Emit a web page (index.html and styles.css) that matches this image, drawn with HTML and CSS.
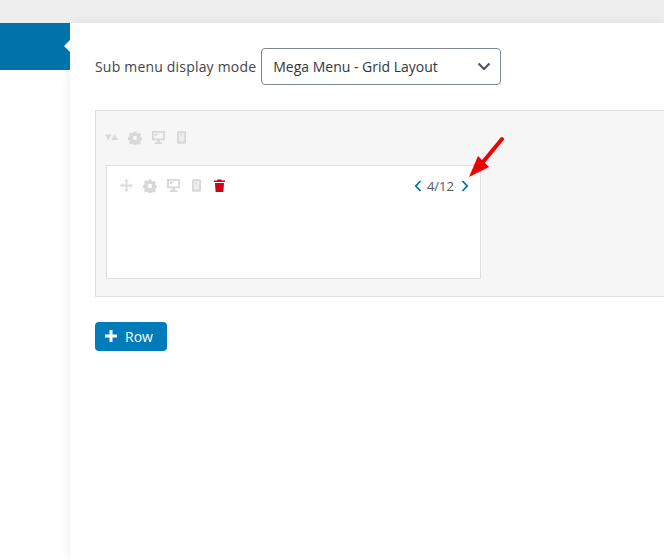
FILE: index.html
```html
<!DOCTYPE html>
<html lang="en">
<head>
<meta charset="utf-8">
<title>Mega Menu</title>
<link rel="stylesheet" href="styles.css">
</head>
<body>
<div class="topbar"></div>
<div class="layout">
  <aside class="sidebar"><div class="tab"><span class="tab-notch"></span></div></aside>
  <main class="main">
    <div class="mode-row">
      <label class="mode-label">Sub menu display mode</label>
      <div class="select"><span>Mega Menu - Grid Layout</span>
        <svg class="select-caret" width="14" height="9" viewBox="0 0 14 9"><path d="M1.500 1.500 7 7l5.500-5.500" fill="none" stroke="#50575e" stroke-width="2.200"/></svg>
      </div>
    </div>
    <section class="row-box">
      <div class="toolbar row-toolbar">
        <svg class="ic" width="13" height="7" viewBox="0 0 13 7"><path d="M0 .5h6.400L3.200 6zM6.200 6l3.300-5.500L13 6z" fill="#d8d8d8"/></svg>
        <svg class="ic" width="14" height="14" viewBox="0 0 15 15"><use href="#gear"/></svg>
        <svg class="ic" width="13" height="13" viewBox="0 0 14 14"><use href="#desk"/></svg>
        <svg class="ic ic-phone" width="9" height="13" viewBox="0 0 10 14"><use href="#phone"/></svg>
      </div>
      <div class="col-box">
        <div class="toolbar col-toolbar">
          <svg class="ic" width="13" height="13" viewBox="0 0 14 14"><path d="M7 0l2.600 2.800H8V6h3.200V4.400L14 7l-2.800 2.600V8H8v3.200h1.600L7 14l-2.600-2.800H6V8H2.800v1.600L0 7l2.800-2.600V6H6V2.800H4.400z" fill="#dcdcdc"/></svg>
          <svg class="ic" width="14" height="14" viewBox="0 0 15 15"><use href="#gear"/></svg>
          <svg class="ic" width="13" height="13" viewBox="0 0 14 14"><use href="#desk"/></svg>
          <svg class="ic ic-phone" width="9" height="13" viewBox="0 0 10 14"><use href="#phone"/></svg>
          <svg class="ic ic-trash" width="11" height="13" viewBox="0 0 11 13"><path d="M3.600.5h3.800l.6 1h3v1.500H0V1.500h3zM1 4h9l-.6 9H1.600z" fill="#d0021b"/></svg>
          <div class="pager">
            <svg width="8" height="12" viewBox="0 0 8 12"><path d="M6.500 1 1.800 6l4.700 5" fill="none" stroke="#0073aa" stroke-width="1.800"/></svg>
            <span class="pager-text">4/12</span>
            <svg width="8" height="12" viewBox="0 0 8 12"><path d="M1.500 1l4.700 5-4.700 5" fill="none" stroke="#0073aa" stroke-width="1.800"/></svg>
          </div>
        </div>
      </div>
    </section>
    <button class="add-row" type="button">
      <svg class="plus" width="12" height="12" viewBox="0 0 12 12"><path d="M6 0v12M0 6h12" stroke="#fff" stroke-width="3" fill="none"/></svg>
      <span>Row</span>
    </button>
  </main>
</div>
<svg class="arrow" width="44" height="50" viewBox="0 0 44 50"><path d="M40 3 21 26" stroke="#f00000" stroke-width="4" stroke-linecap="round" fill="none"/><path d="M7 41 16 20 27 31z" fill="#f00000"/></svg>
<svg class="defs" width="0" height="0">
  <defs>
    <g id="gear"><path fill-rule="evenodd" d="M6 0h3l.4 2 1.300.6L12.500 1.500l2 2-1.100 1.800.6 1.300 2 .4v2.800l-2 .4-.6 1.300 1.100 1.800-2 2-1.800-1.100-1.300.6-.4 2H6l-.4-2-1.300-.6-1.800 1.100-2-2 1.100-1.800-.6-1.300-2-.4V6.500l2-.4.6-1.300L.5 3l2-2 1.800 1.100 1.300-.6zM7.500 5a2.500 2.500 0 1 0 0 5 2.500 2.500 0 0 0 0-5z" fill="#d8d8d8" transform="translate(.5 .5) scale(.93)"/></g>
    <g id="desk"><path fill-rule="evenodd" d="M0 0h14v10H8.500v2h2.500v2H3v-2h2.500v-2H0zM2 2v6h10V2zM3 3h5L3 6z" fill="#d8d8d8"/></g>
    <g id="phone"><rect width="10" height="14" rx="1.500" fill="#d8d8d8"/><rect x="2" y="2" width="6" height="9.500" fill="#eeeeee"/><path d="M6 3 4 7V3z" fill="#d8d8d8"/></g>
  </defs>
</svg>
</body>
</html>
```
FILE: styles.css
```css
* { box-sizing: border-box; }
html, body { height: 100%; }
body {
  margin: 0;
  overflow: hidden;
  position: relative;
  display: flex;
  flex-direction: column;
  background: #fff;
  font-family: "Open Sans", "Noto Sans", sans-serif;
  font-size: 14px;
  color: #444;
}
.topbar { height: 23px; flex: none; background: #eee; }
.layout { flex: 1; display: flex; min-height: 0; }
.sidebar { width: 70px; flex: none; position: relative; z-index: 2; }
.tab { height: 47px; background: #0073aa; position: relative; }
.tab-notch {
  position: absolute;
  right: 0;
  top: 17px;
  border: 6px solid transparent;
  border-left: 0;
  border-right-color: #fff;
}
.main {
  flex: 1;
  min-width: 0;
  padding: 25px 0 0 25px;
  background: #fff;
  box-shadow: 0 0 10px rgba(0, 0, 0, .08);
}
.mode-row { display: flex; align-items: center; gap: 5px; height: 37px; }
.mode-label { white-space: nowrap; color: #444; letter-spacing: .19px; }
.select {
  width: 240px;
  height: 37px;
  border: 1px solid #7e8993;
  border-radius: 4px;
  padding: 0 9px 0 11px;
  display: flex;
  align-items: center;
  justify-content: space-between;
  color: #32373c;
}
.row-box {
  margin-top: 25px;
  height: 187px;
  background: #f6f6f6;
  border: 1px solid #e0e0e0;
  border-right: 0;
  padding: 19px 0 0 9px;
}
.toolbar { display: flex; align-items: center; gap: 10px; }
.ic { flex: none; }
.ic-phone { margin-left: 2px; }
.ic-trash { margin-left: 3px; }
.row-toolbar { height: 15px; }
.col-box {
  margin: 20px 0 0 1px;
  width: 375px;
  height: 114px;
  background: #fff;
  border: 1px solid #e0e0e0;
  padding: 12px 11px 0 13px;
}
.col-toolbar { height: 15px; }
.pager { margin-left: auto; display: flex; align-items: center; gap: 5px; }
.pager-text { font-size: 13px; color: #50575e; margin-right: 2px; }
.add-row {
  margin-top: 25px;
  width: 72px;
  height: 29px;
  border: 0;
  border-radius: 4px;
  background: #007cba;
  color: #fff;
  font: inherit;
  padding: 0 0 0 10px;
  display: flex;
  align-items: center;
  gap: 8px;
}
.plus { margin-bottom: 2px; }
.arrow { position: absolute; left: 462px; top: 136px; }
.defs { position: absolute; }
```
